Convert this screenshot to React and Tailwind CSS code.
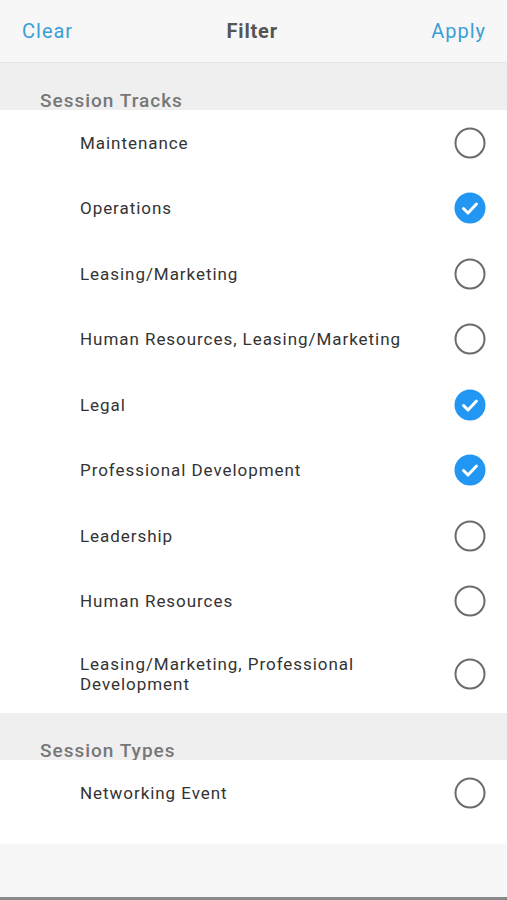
import React from "react";

const tracks = [
  { label: "Maintenance", checked: false },
  { label: "Operations", checked: true },
  { label: "Leasing/Marketing", checked: false },
  { label: "Human Resources, Leasing/Marketing", checked: false },
  { label: "Legal", checked: true },
  { label: "Professional Development", checked: true },
  { label: "Leadership", checked: false },
  { label: "Human Resources", checked: false },
  { label: "Leasing/Marketing, Professional Development", checked: false, tall: true },
];

function Radio({ checked }) {
  if (checked) {
    return (
      <svg width="32" height="32" viewBox="0 0 32 32">
        <circle cx="16" cy="16" r="15.5" fill="#2196f3" />
        <path d="M9.5 16.5 L14 21 L22.5 12" fill="none" stroke="#fff" strokeWidth="3" strokeLinecap="round" strokeLinejoin="round" />
      </svg>
    );
  }
  return (
    <svg width="32" height="32" viewBox="0 0 32 32">
      <circle cx="16" cy="16" r="14.5" fill="none" stroke="#6b6b6b" strokeWidth="2" />
    </svg>
  );
}

function Row({ label, checked, tall }) {
  return (
    <div className={`flex items-center pl-[80px] pr-[21px] ${tall ? "h-[79px]" : "h-[65.5px]"}`}>
      <div className="flex-1 text-[17px] leading-[20px] tracking-[0.95px] text-[#333] pr-[40px]">{label}</div>
      <Radio checked={checked} />
    </div>
  );
}

function SectionHeader({ title }) {
  return (
    <div className="h-[47px] bg-[#efefef] flex items-end pl-[40px]">
      <span className="text-[19px] leading-[18px] tracking-[1px] text-[#777] font-medium">{title}</span>
    </div>
  );
}

export default function App() {
  return (
    <div className="w-[507px] h-[900px] bg-[#f7f7f7] flex flex-col" style={{ fontFamily: "Roboto, 'Noto Sans', sans-serif" }}>
      <div className="h-[63px] flex items-center justify-between pl-[22px] pr-[21px] border-b border-[#e6e6e6] bg-[#f7f7f7]">
        <span className="text-[20px] tracking-[1px] text-[#3a9fd6]">Clear</span>
        <span className="text-[20px] tracking-[0.8px] font-bold text-[#555]">Filter</span>
        <span className="text-[20px] tracking-[1px] text-[#3a9fd6]">Apply</span>
      </div>
      <SectionHeader title="Session Tracks" />
      <div className="bg-white">
        {tracks.map((t) => (
          <Row key={t.label} {...t} />
        ))}
      </div>
      <SectionHeader title="Session Types" />
      <div className="bg-white pb-[18px]">
        <Row label="Networking Event" checked={false} />
      </div>
      <div className="flex-1 bg-[#f7f7f7] border-b-[3px] border-[#888]" />
    </div>
  );
}
